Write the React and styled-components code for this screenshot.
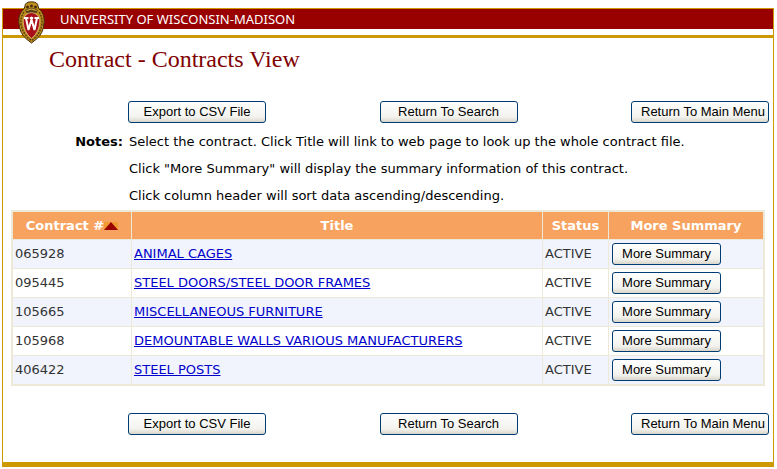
import React from 'react';
import styled, { createGlobalStyle } from 'styled-components';

const colors = {
  red: '#990000',
  gold: '#cc9900',
  title: '#800000',
  header: '#f7a35f',
  line: '#ece9d8',
  stripe: '#f1f4fd',
  link: '#0000cc',
  text: '#333',
};

const GlobalStyle = createGlobalStyle`
  body {
    margin: 0;
    background: #fff;
    color: #000;
    font-family: Verdana, 'DejaVu Sans', sans-serif;
    font-size: 13px;
  }
`;

const Page = styled.div`
  position: relative;
  margin: 8px 3px 2px 2px;
  border: 1px solid ${colors.gold};
  border-bottom-width: 5px;
`;

const Banner = styled.header`
  padding-left: 57px;
  background: ${colors.red};
  color: #fff;
  font-family: 'Noto Sans', sans-serif;
  font-size: 13px;
  line-height: 20px;
`;

const Rule = styled.div`
  height: 3px;
  margin-top: 6px;
  background: ${colors.gold};
`;

const CrestSvg = styled.svg`
  position: absolute;
  top: -8px;
  left: 14px;
  width: 29px;
  height: 43px;
`;

const Heading = styled.h1`
  margin: 8px 0 28px 46px;
  color: ${colors.title};
  font-family: 'Liberation Serif', serif;
  font-size: 24px;
  font-weight: normal;
  line-height: 27px;
`;

const Actions = styled.div`
  display: flex;
  justify-content: space-between;
  padding: 0 4px 0 125px;
`;

const Button = styled.button`
  width: ${({ $small }) => ($small ? '109px' : '138px')};
  height: 22px;
  padding: 0 9px;
  border: 1px solid #003c74;
  border-radius: 3px;
  background: linear-gradient(#fff, #f2f2ee 75%, #d9d5c9);
  color: #000;
  font-family: 'Liberation Sans', sans-serif;
  font-size: 13px;
  line-height: 20px;
  white-space: nowrap;
`;

const Notes = styled.section`
  display: grid;
  grid-template-columns: 120px 1fr;
  column-gap: 6px;
  margin: 5px 0 1px;
  line-height: 27px;
`;

const NotesLabel = styled.strong`
  text-align: right;
`;

const Note = styled.p`
  grid-column: 2;
  margin: 0;
`;

const TableWrap = styled.div`
  margin: 0 8px 27px;
`;

const Table = styled.table`
  width: 100%;
  border: 1px solid ${colors.line};
  border-spacing: 1px;
  background: ${colors.line};
  color: ${colors.text};
  table-layout: fixed;
`;

const Th = styled.th`
  width: ${({ $width }) => $width || 'auto'};
  height: 27px;
  padding: 0;
  background: ${colors.header};
  color: #fff;
`;

const Row = styled.tr`
  background: #fff;

  &:nth-child(odd) {
    background: ${colors.stripe};
  }
`;

const Td = styled.td`
  height: 28px;
  padding: 0 2px;
  line-height: 22px;

  a {
    color: ${colors.link};
  }

  button {
    display: block;
    margin-left: 1px;
  }
`;

const SortArrow = styled.svg`
  width: 14px;
  height: 8px;
`;

const Footer = styled.footer`
  padding-bottom: 27px;
`;

const contracts = [
  { id: '065928', title: 'ANIMAL CAGES' },
  { id: '095445', title: 'STEEL DOORS/STEEL DOOR FRAMES' },
  { id: '105665', title: 'MISCELLANEOUS FURNITURE' },
  { id: '105968', title: 'DEMOUNTABLE WALLS VARIOUS MANUFACTURERS' },
  { id: '406422', title: 'STEEL POSTS' },
];

const Crest = () => (
  <CrestSvg viewBox="0 0 29 43" aria-hidden="true">
    <path
      d="M8 5 Q8 1 14.500 0.800 Q21 1 21 5 L22 8 Q27.500 12 27.200 21 Q26.500 33 19 38.500 L14.500 42 L10 38.500 Q2.500 33 1.800 21 Q1.500 12 7 8 Z"
      fill="#c08e1c"
      stroke="#443010"
    />
    <path
      d="M7 11 Q3.500 16 4 23 Q6 34 14.500 39.500 Q23 34 25 23 Q25.500 16 22 11"
      fill="none"
      stroke="#5a4114"
      strokeWidth="1.500"
      strokeDasharray="2 1"
    />
    <path d="M8 9 Q14.500 5 21 9 L19.500 12 H9.500 Z" fill="#5a4114" />
    <circle cx="10.500" cy="6" r="1.500" fill="#443010" />
    <circle cx="14.500" cy="5" r="1.500" fill="#443010" />
    <circle cx="18.500" cy="6" r="1.500" fill="#443010" />
    <path d="M9.500 9.500 Q14.500 6.500 19.500 9.500" fill="none" stroke="#e6bd4a" />
    <path
      d="M14.500 11.500 Q22 12.500 22.800 20 Q22.500 31 14.500 37.500 Q6.500 31 6.200 20 Q7 12.500 14.500 11.500 Z"
      fill="#a80f18"
      stroke="#ddc98e"
      strokeWidth="0.700"
    />
    <path
      d="M7 17 H11.500 M12.800 17 H16.200 M17.500 17 H22 M9 17 L11.500 29 L14.500 18.500 L17.500 29 L20 17"
      fill="none"
      stroke="#fff"
      strokeWidth="2"
    />
  </CrestSvg>
);

const ActionBar = () => (
  <Actions>
    <Button type="button">Export to CSV File</Button>
    <Button type="button">Return To Search</Button>
    <Button type="button">Return To Main Menu</Button>
  </Actions>
);

const ContractTable = () => (
  <TableWrap>
    <Table>
      <thead>
        <tr>
          <Th $width="118px" aria-sort="ascending">
            Contract #
            <SortArrow viewBox="0 0 14 8" aria-hidden="true">
              <rect width="14" height="8" fill="#f09a32" />
              <path d="M0 8 L7 0 L14 8 Z" fill={colors.red} />
            </SortArrow>
          </Th>
          <Th>Title</Th>
          <Th $width="65px">Status</Th>
          <Th $width="154px">More Summary</Th>
        </tr>
      </thead>
      <tbody>
        {contracts.map(({ id, title }) => (
          <Row key={id}>
            <Td>{id}</Td>
            <Td>
              <a href={`#${id}`}>{title}</a>
            </Td>
            <Td>ACTIVE</Td>
            <Td>
              <Button type="button" $small>
                More Summary
              </Button>
            </Td>
          </Row>
        ))}
      </tbody>
    </Table>
  </TableWrap>
);

const App = () => (
  <>
    <GlobalStyle />
    <Page>
      <Banner>UNIVERSITY OF WISCONSIN-MADISON</Banner>
      <Rule />
      <Crest />
      <Heading>Contract - Contracts View</Heading>
      <ActionBar />
      <Notes>
        <NotesLabel>Notes:</NotesLabel>
        <Note>Select the contract. Click Title will link to web page to look up the whole contract file.</Note>
        <Note>Click &quot;More Summary&quot; will display the summary information of this contract.</Note>
        <Note>Click column header will sort data ascending/descending.</Note>
      </Notes>
      <ContractTable />
      <Footer>
        <ActionBar />
      </Footer>
    </Page>
  </>
);

export default App;
